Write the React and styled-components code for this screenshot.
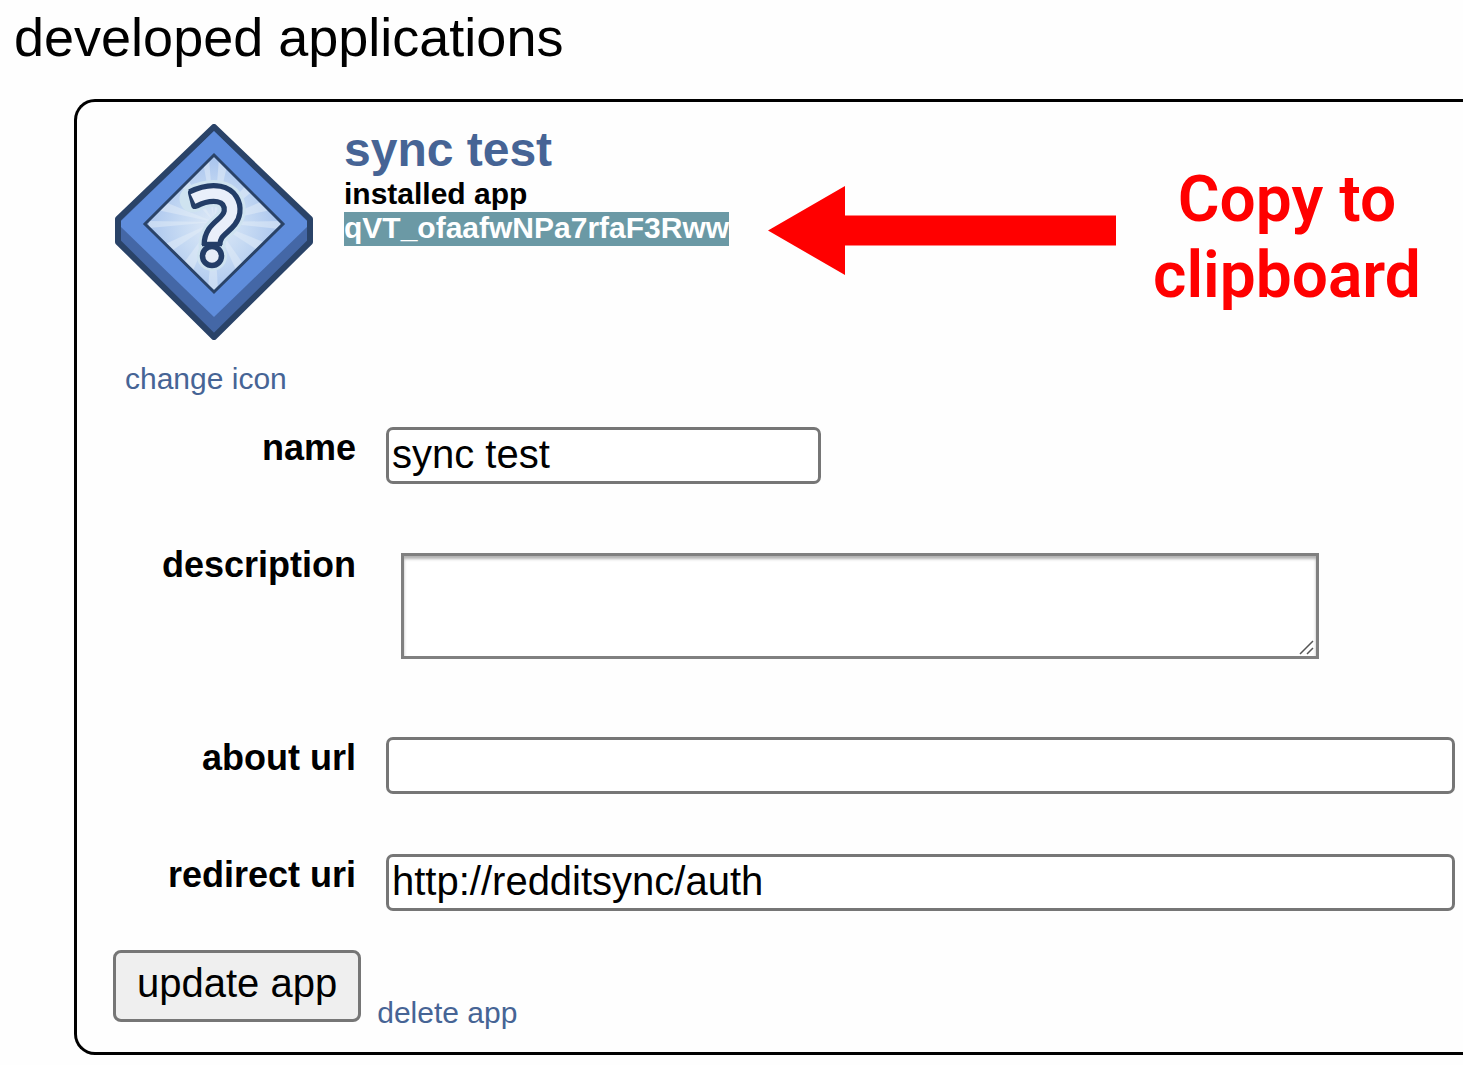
import React from "react";
import styled, { createGlobalStyle } from "styled-components";

const GlobalStyle = createGlobalStyle`
  *, *::before, *::after { box-sizing: border-box; }
  body {
    margin: 0;
    background: #fefefe;
    color: #000;
    font-family: "Liberation Sans", Arial, sans-serif;
    overflow-x: hidden;
  }
`;

const Page = styled.main`
  padding: 7px 0 10px;
`;

const Heading = styled.h1`
  margin: 0 0 32px;
  padding-left: 14px;
  font-size: 54px;
  line-height: 60px;
  font-weight: 400;
`;

const Card = styled.section`
  margin-left: 74px;
  padding: 22px 8px 22px 36px;
  border: 3px solid #000;
  border-right: 0;
  border-radius: 21px 0 0 21px;
`;

const AppHeader = styled.header`
  display: flex;
  align-items: flex-start;
`;

const AppIcon = styled.svg`
  flex: none;
  width: 202px;
  height: 216px;
  margin-right: 29px;
`;

const Details = styled.div`
  display: flex;
  flex-direction: column;
  align-items: flex-start;
  font-size: 30px;
  line-height: 36px;
  font-weight: 700;
`;

const Link = styled.a`
  color: #466495;
  font-size: 30px;
  line-height: 34px;
  text-decoration: none;
`;

const AppName = styled.h2`
  margin: 0;
  font-size: 48px;
  line-height: 52px;
  color: #466495;
`;

const ClientId = styled.span`
  padding-bottom: 2px;
  background: #6b99a5;
  color: #fff;
  line-height: 32px;
`;

const Arrow = styled.svg`
  flex: none;
  width: 348px;
  height: 90px;
  margin: 62px 37px 0 39px;
`;

const Callout = styled.p`
  flex: none;
  margin: 38px 0 0;
  font-family: Roboto, sans-serif;
  font-size: 64px;
  line-height: 76px;
  font-weight: 600;
  color: #f00;
  text-align: center;
`;

const IconAction = styled.div`
  display: flex;
  padding: 22px 12px 31px;
`;

const Fields = styled.div`
  display: grid;
  grid-template-columns: 243px 1fr;
  column-gap: 30px;
  row-gap: 60px;
`;

const Label = styled.label`
  font-size: 36px;
  line-height: 41px;
  font-weight: 700;
  text-align: right;
`;

const TextInput = styled.input`
  width: ${(p) => (p.$short ? "435px" : "100%")};
  height: 57px;
  padding: 0 3px 2px;
  border: 3px solid #767676;
  border-radius: 7px;
  background: #fff;
  color: #000;
  font-family: inherit;
  font-size: 40px;
  outline: none;
`;

const TextArea = styled.textarea`
  display: block;
  width: 918px;
  height: 106px;
  margin: 9px 15px 18px;
  padding: 3px;
  border: 3px solid #808080;
  background: #fff;
  box-shadow: inset 0 3px 3px rgba(0, 0, 0, 0.3);
  font-family: inherit;
  font-size: 30px;
  resize: none;
  outline: none;
`;

const AreaFrame = styled.div`
  position: relative;
  justify-self: start;
`;

const Grip = styled.svg`
  position: absolute;
  right: 20px;
  bottom: 22px;
  width: 15px;
  height: 15px;
  pointer-events: none;
`;

const Footer = styled.footer`
  display: flex;
  align-items: flex-end;
  gap: 16px;
  margin-top: 39px;
`;

const SubmitButton = styled.button`
  height: 72px;
  margin-bottom: 8px;
  padding: 0 21px 6px;
  border: 3px solid #767676;
  border-radius: 8px;
  background: #efefef;
  color: #000;
  font-family: inherit;
  font-size: 40px;
`;

const MARK = "M80 75 C90 70 100 69 106 70 C116 72 120 80 119 88 C117 102 99 103 99 121";

const RAYS = [
  "M101 98 L90 38 L96 34 Z",
  "M101 98 L106 34 L114 42 Z",
  "M101 98 L66 60 L74 54 Z",
  "M101 98 L134 60 L140 67 Z",
  "M101 98 L44 86 L52 78 Z",
  "M101 98 L150 77 L158 86 Z",
  "M101 98 L36 97 L36 104 Z",
  "M101 98 L168 97 L166 105 Z",
  "M101 98 L50 121 L57 128 Z",
  "M101 98 L146 127 L153 119 Z",
  "M101 98 L70 140 L79 149 Z",
  "M101 98 L124 148 L131 141 Z",
  "M101 98 L95 164 L105 166 Z",
];

function DiamondIcon() {
  return (
    <AppIcon viewBox="0 0 202 216" role="img" aria-label="app icon">
      <defs>
        <radialGradient id="glow" gradientUnits="userSpaceOnUse" cx="101" cy="102" r="66">
          <stop offset="0" stopColor="#dfeaf7" />
          <stop offset="0.5" stopColor="#c6daf3" />
          <stop offset="1" stopColor="#abc6ee" />
        </radialGradient>
        <clipPath id="pane">
          <path d="M101 31 L170 100 L101 168 L32 100 Z" />
        </clipPath>
      </defs>
      <path
        d="M101 3 L197 95 V118 L101 213 L5 118 V95 Z"
        fill="#4467a6"
        stroke="#2a4368"
        strokeWidth="6"
        strokeLinejoin="round"
      />
      <path d="M101 7 L194 97 L194 103 L101 193 L8 103 L8 97 Z" fill="#5f8ddc" />
      <path d="M101 31 L170 100 L101 168 L32 100 Z" fill="url(#glow)" />
      <g clipPath="url(#pane)" fill="#e3edf8" opacity="0.5">
        {RAYS.map((d) => (
          <path key={d} d={d} />
        ))}
      </g>
      <path d="M101 31 L170 100 L101 168 L32 100 Z" fill="none" stroke="#2a4368" strokeWidth="3" />
      <g fill="none" strokeLinejoin="round">
        <path d={MARK} stroke="#cfe3f0" strokeWidth="27" strokeLinecap="round" />
        <circle cx="99" cy="132" r="15" fill="#cfe3f0" />
        <path d="M79 69 L82 81" stroke="#233d67" strokeWidth="8" strokeLinecap="round" />
        <path d={MARK} stroke="#233d67" strokeWidth="21" />
        <circle cx="99" cy="132" r="9.500" fill="#e6edf8" stroke="#233d67" strokeWidth="5.500" />
        <path d={MARK} stroke="#e9effa" strokeWidth="10.500" />
        <path d="M89 120 H109" stroke="#233d67" strokeWidth="4.500" />
      </g>
    </AppIcon>
  );
}

export default function App() {
  return (
    <>
      <GlobalStyle />
      <Page>
        <Heading>developed applications</Heading>
        <Card>
          <AppHeader>
            <DiamondIcon />
            <Details>
              <AppName>sync test</AppName>
              <span>installed app</span>
              <ClientId>qVT_ofaafwNPa7rfaF3Rww</ClientId>
            </Details>
            <Arrow viewBox="0 0 348 90" aria-hidden="true">
              <path d="M0 44.500 L77 0 V29.500 H348 V59.500 H77 V89 Z" fill="#f00" />
            </Arrow>
            <Callout>
              Copy to
              <br />
              clipboard
            </Callout>
          </AppHeader>
          <IconAction>
            <Link href="#icon">change icon</Link>
          </IconAction>
          <form onSubmit={(e) => e.preventDefault()}>
            <Fields>
              <Label htmlFor="name">name</Label>
              <TextInput id="name" type="text" $short defaultValue="sync test" />
              <Label htmlFor="description">description</Label>
              <AreaFrame>
                <TextArea id="description" />
                <Grip viewBox="0 0 15 15" aria-hidden="true">
                  <path d="M1 14 L14 1 M8 14 L14 8" stroke="#555" strokeWidth="1.500" />
                </Grip>
              </AreaFrame>
              <Label htmlFor="about">about url</Label>
              <TextInput id="about" type="text" />
              <Label htmlFor="redirect">redirect uri</Label>
              <TextInput id="redirect" type="text" defaultValue="http://redditsync/auth" />
            </Fields>
            <Footer>
              <SubmitButton type="submit">update app</SubmitButton>
              <Link href="#delete">delete app</Link>
            </Footer>
          </form>
        </Card>
      </Page>
    </>
  );
}
